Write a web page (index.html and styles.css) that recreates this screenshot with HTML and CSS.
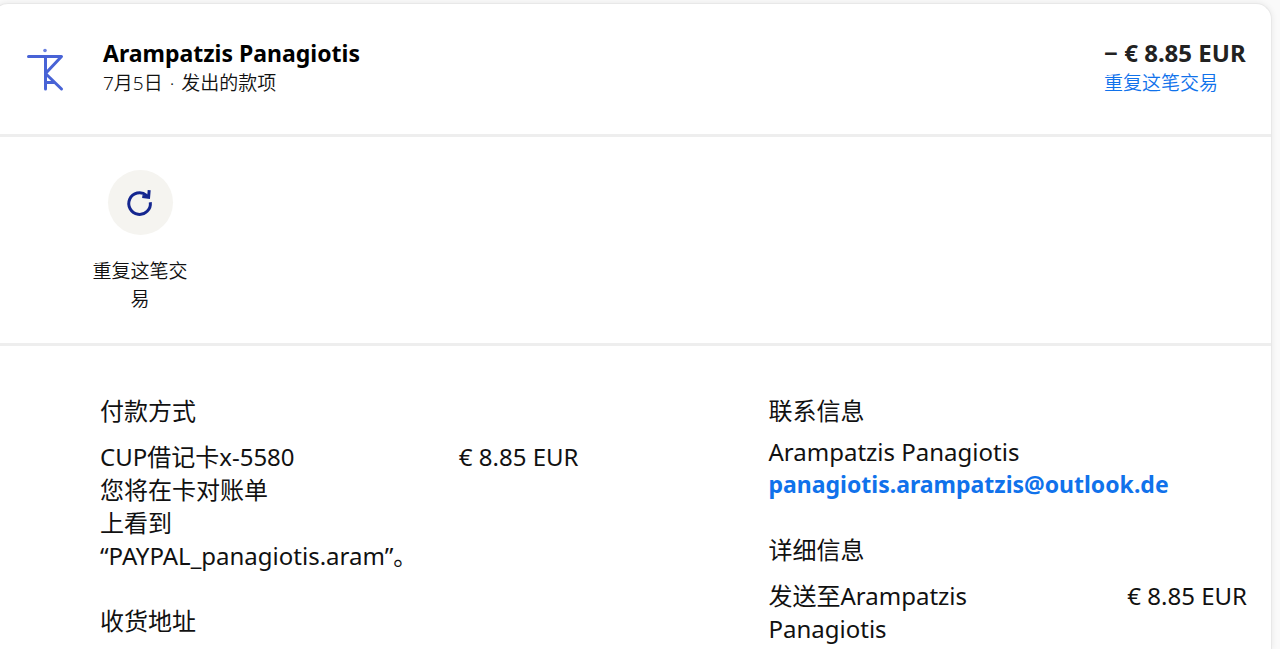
FILE: index.html
```html
<!DOCTYPE html>
<html lang="zh-CN">
<head>
	<meta charset="UTF-8">
	<meta name="viewport" content="width=device-width, initial-scale=1.0">
	<title>Arampatzis Panagiotis</title>
	<link rel="stylesheet" href="styles.css">
</head>
<body>
	<main class="card">
		<header class="summary">
			<svg class="logo" viewBox="0 0 64 64" aria-hidden="true">
				<circle cx="32" cy="13.500" r="1.800" fill="#6a80e0" />
				<path d="M15.500 19.500H48.500L32.500 36.500V52M32.500 19.500V36.500L48.500 52M32.500 45.500H41.500" fill="none" stroke="#4863d6" stroke-width="3" stroke-linecap="round" stroke-linejoin="round" />
			</svg>
			<div class="payee">
				<h1 class="name">Arampatzis Panagiotis</h1>
				<p class="meta">7月5日<span class="dot"> · </span>发出的款项</p>
			</div>
			<div class="total">
				<p class="total-amount">− € 8.85 EUR</p>
				<a class="repeat-link" href="#">重复这笔交易</a>
			</div>
		</header>

		<section class="actions">
			<button class="action" type="button">
				<span class="action-icon">
					<svg viewBox="0 0 32 32" width="32" height="32" aria-hidden="true">
						<path d="M26.300 15.200A10.800 10.800 0 1 1 22.500 8.300L24.500 10.200" />
						<path d="M25.200 3.200L24.600 10.200L18.300 9.400" />
					</svg>
				</span>
				<span class="action-label">重复这笔交易</span>
			</button>
		</section>

		<section class="details">
			<div class="column">
				<div class="block">
					<h2>付款方式</h2>
					<div class="line">
						<p class="line-text">CUP借记卡x-5580<br>您将在卡对账单<br>上看到<br>“PAYPAL_panagiotis.aram”。</p>
						<p class="amount">€ 8.85 EUR</p>
					</div>
				</div>
				<div class="block">
					<h2>收货地址</h2>
				</div>
			</div>
			<div class="column">
				<div class="block">
					<h2>联系信息</h2>
					<p class="contact">Arampatzis Panagiotis</p>
					<a class="email" href="mailto:panagiotis.arampatzis@outlook.de">panagiotis.arampatzis@outlook.de</a>
				</div>
				<div class="block">
					<h2>详细信息</h2>
					<div class="line">
						<p class="line-text">发送至Arampatzis<br>Panagiotis</p>
						<p class="amount">€ 8.85 EUR</p>
					</div>
				</div>
			</div>
		</section>
	</main>
</body>
</html>
```
FILE: styles.css
```css
* {
	box-sizing: border-box;
}

body {
	display: flex;
	flex-direction: column;
	min-height: 100vh;
	margin: 0;
	background-color: #fafafa;
	color: #111;
	font-family: "Noto Sans", "Noto Sans CJK SC", sans-serif;
	font-size: 24px;
	line-height: 33px;
}

h1, h2, p {
	margin: 0;
	font-size: 24px;
	font-weight: 400;
}

a {
	color: #1072eb;
	text-decoration: none;
}

a:hover {
	text-decoration: underline;
}

.card {
	flex: 1;
	margin: 3px 8px 0 -8px;
	background-color: #fff;
	border: 1px solid #e8e8e8;
	border-bottom: 0;
	border-radius: 16px 16px 0 0;
	box-shadow: 0 0 6px rgba(0, 0, 0, 0.08);
}

.summary {
	display: flex;
	align-items: flex-start;
	padding: 33px 22px 33px 20px;
	border-bottom: 3px solid #eee;
}

.logo {
	width: 64px;
	height: 64px;
	margin-right: 26px;
}

.payee {
	flex: 1;
}

.name {
	color: #000;
	font-size: 23px;
	font-weight: 700;
	line-height: 32px;
}

.meta {
	font-size: 19px;
	line-height: 28px;
	font-weight: 350;
}

.dot {
	margin: 0 2px;
}

.total {
	min-width: 145px;
}

.total-amount {
	color: #222;
	font-weight: 700;
	line-height: 32px;
}

.repeat-link {
	display: block;
	font-size: 19px;
	line-height: 28px;
	font-weight: 350;
}

.actions {
	padding: 33px 0 30px 98px;
	border-bottom: 3px solid #eee;
}

.action {
	display: flex;
	flex-direction: column;
	align-items: center;
	gap: 22px;
	width: 98px;
	padding: 0;
	border: 0;
	background: none;
	color: #111;
	font-family: inherit;
	font-size: 19px;
	font-weight: 350;
	line-height: 28px;
	cursor: pointer;
}

.action-icon {
	display: flex;
	align-items: center;
	justify-content: center;
	width: 65px;
	height: 65px;
	border-radius: 50%;
	background-color: #f5f4f0;
}

.action-icon path {
	fill: none;
	stroke: #14268f;
	stroke-width: 3;
}

.details {
	display: flex;
	gap: 190px;
	padding: 48px 24px 0 107px;
}

.column {
	flex: 1;
}

.block {
	margin-bottom: 32px;
}

.block:last-child {
	margin-bottom: 0;
}

.block h2 {
	margin-bottom: 8px;
}

.line {
	display: flex;
	justify-content: space-between;
	padding-top: 5px;
}

.amount {
	white-space: nowrap;
}

.email {
	display: block;
	font-size: 23px;
	font-weight: 700;
}
```
